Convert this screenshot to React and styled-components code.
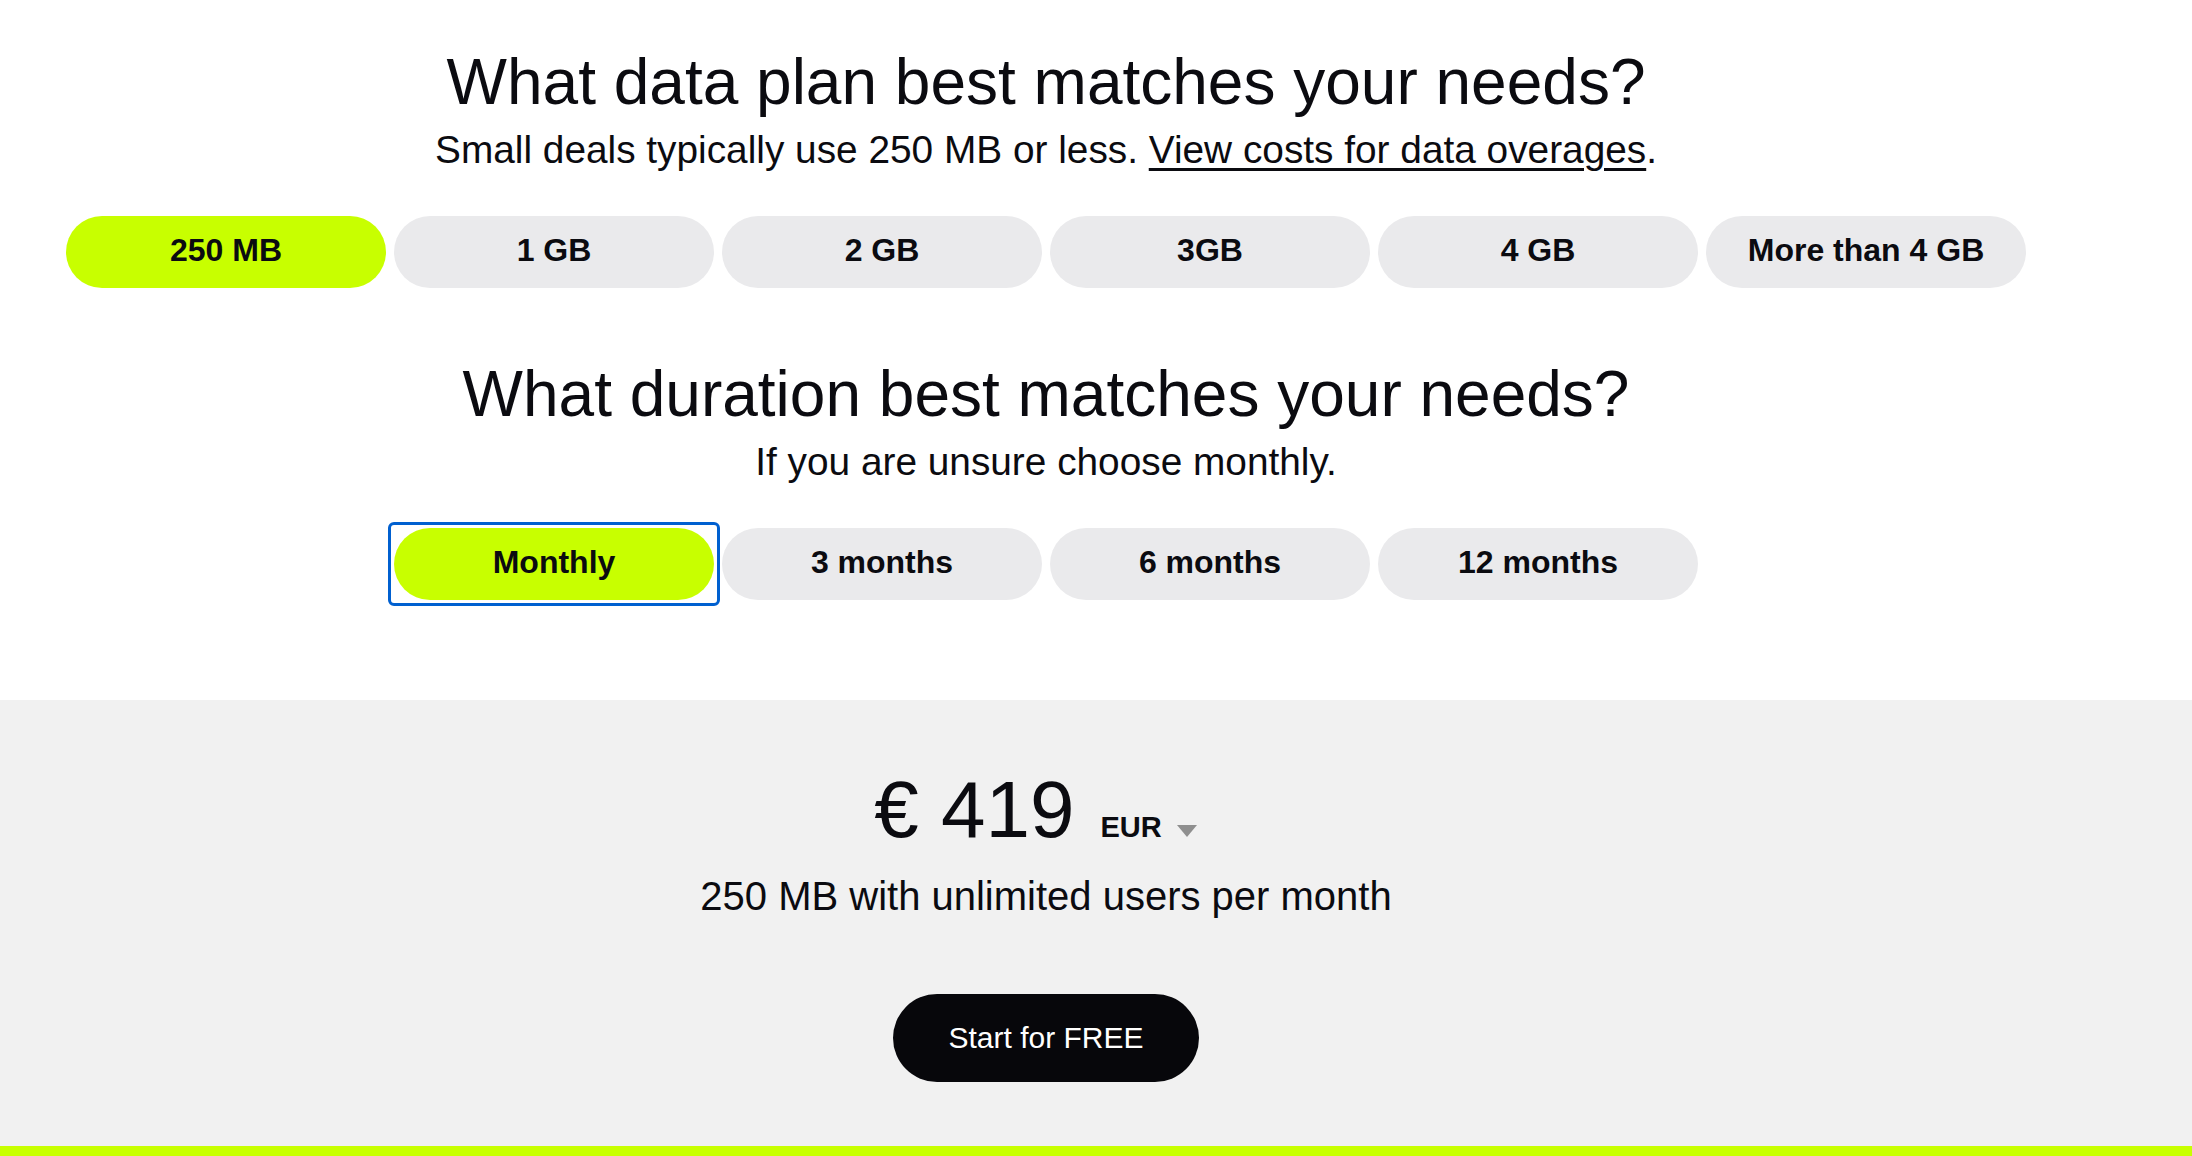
import styled, { createGlobalStyle } from 'styled-components';

const dataPlans = ['250 MB', '1 GB', '2 GB', '3GB', '4 GB', 'More than 4 GB'];
const durations = ['Monthly', '3 months', '6 months', '12 months'];

const App = () => {
    return (
        <>
            <GlobalStyle />
            <Page>
                <ChooserSection>
                    <Question>What data plan best matches your needs?</Question>
                    <Hint>
                        Small deals typically use 250 MB or less.{' '}
                        <HintLink href=''>View costs for data overages</HintLink>.
                    </Hint>
                    <OptionRow>
                        {dataPlans.map((plan, i) => (
                            <OptionButton key={plan} $active={i === 0}>
                                {plan}
                            </OptionButton>
                        ))}
                    </OptionRow>

                    <Question $spaced>What duration best matches your needs?</Question>
                    <Hint>If you are unsure choose monthly.</Hint>
                    <OptionRow>
                        {durations.map((item, i) => (
                            <OptionButton key={item} $active={i === 0} $focused={i === 0}>
                                {item}
                            </OptionButton>
                        ))}
                    </OptionRow>
                </ChooserSection>

                <PriceSection>
                    <PriceRow>
                        <Amount>€ 419</Amount>
                        <CurrencyButton>
                            EUR
                            <svg width='20' height='12' viewBox='0 0 20 12'>
                                <polygon points='0,0 20,0 10,12' fill='#8f8f8f' />
                            </svg>
                        </CurrencyButton>
                    </PriceRow>
                    <PlanSummary>250 MB with unlimited users per month</PlanSummary>
                    <StartButton>Start for FREE</StartButton>
                </PriceSection>
                <AccentBar />
            </Page>
        </>
    );
};

export default App;

const GlobalStyle = createGlobalStyle`
    body {
        margin: 0;
        background: #ffffff;
        color: #0b0b10;
        font-family: "Liberation Sans", Arial, sans-serif;
    }
`;

const Page = styled.div`
    display: flex;
    flex-direction: column;
`;

const ChooserSection = styled.section`
    display: flex;
    flex-direction: column;
    align-items: center;
    padding: 44px 100px 100px 0;
`;

const Question = styled.h2`
    margin: ${(p) => (p.$spaced ? '68px' : '0')} 0 0;
    font-size: 64px;
    line-height: 76px;
    font-weight: 400;
    text-align: center;
`;

const Hint = styled.p`
    margin: 7px 0 0;
    font-size: 38.8px;
    line-height: 46px;
    text-align: center;
`;

const HintLink = styled.a`
    color: #0b0b10;
    text-decoration: underline;
    text-decoration-thickness: 3px;
    text-underline-offset: 5px;
`;

const OptionRow = styled.div`
    display: flex;
    gap: 8px;
    margin-top: 43px;
`;

const OptionButton = styled.button`
    position: relative;
    width: 320px;
    height: 72px;
    padding: 0 0 3px;
    border: none;
    border-radius: 36px;
    background: ${(p) => (p.$active ? '#c8ff00' : '#eaeaec')};
    color: #0b0b10;
    font-family: inherit;
    font-size: 32px;
    font-weight: 700;
    cursor: pointer;

    &::after {
        content: '';
        display: ${(p) => (p.$focused ? 'block' : 'none')};
        position: absolute;
        inset: -6px;
        border: 3px solid #0060d0;
        border-radius: 6px;
    }
`;

const PriceSection = styled.section`
    display: flex;
    flex-direction: column;
    align-items: center;
    padding: 70px 100px 64px 0;
    background: #f1f1f1;
`;

const PriceRow = styled.div`
    display: flex;
    align-items: baseline;
    gap: 26px;
`;

const Amount = styled.span`
    font-size: 80px;
    line-height: 80px;
`;

const CurrencyButton = styled.span`
    display: inline-flex;
    align-items: center;
    gap: 15px;
    padding-right: 21px;
    font-size: 29px;
    font-weight: 700;

    svg {
        margin-top: 6px;
    }
`;

const PlanSummary = styled.p`
    margin: 22px 0 0;
    font-size: 40px;
    line-height: 48px;
`;

const StartButton = styled.button`
    margin-top: 74px;
    height: 88px;
    padding: 0 55px;
    border: none;
    border-radius: 44px;
    background: #07070b;
    color: #ffffff;
    font-family: inherit;
    font-size: 30px;
    cursor: pointer;
`;

const AccentBar = styled.div`
    height: 10px;
    background: #c8ff00;
`;
